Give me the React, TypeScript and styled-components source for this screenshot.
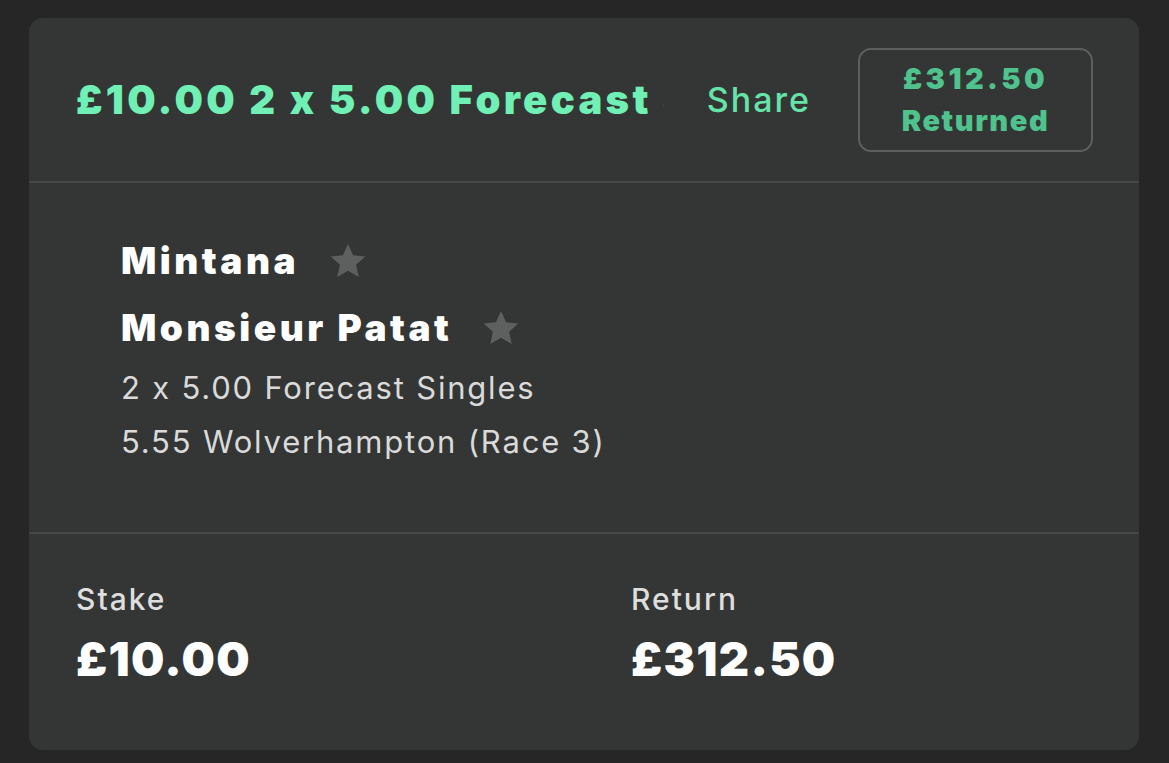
import React from 'react';
import styled, { createGlobalStyle } from 'styled-components';

const GlobalStyle = createGlobalStyle`
  html, body {
    margin: 0;
    padding: 0;
    background: #262626;
    font-family: Inter, "Noto Sans", "Liberation Sans", sans-serif;
    -webkit-font-smoothing: antialiased;
  }
`;

const Page = styled.div`
  padding: 18px 30px 14px 29px;
`;

const Card = styled.div`
  width: 1110px;
  background: #333635;
  border-radius: 14px;
  overflow: hidden;
`;

const Header = styled.div`
  display: flex;
  align-items: center;
  height: 163px;
  padding: 0 46px 0 47px;
  border-bottom: 2px solid #464947;
`;

const Title = styled.div`
  flex: 1;
  min-width: 0;
  overflow: hidden;
  white-space: nowrap;
  font-size: 40px;
  font-weight: 900;
  color: #70f0b4;
  letter-spacing: 3.3px;
`;

const ShareButton = styled.button`
  margin-left: 43px;
  padding: 0;
  border: none;
  background: none;
  font-family: inherit;
  font-size: 34px;
  font-weight: 500;
  color: #66e3a8;
  letter-spacing: 2px;
  cursor: pointer;
`;

const ReturnedBadge = styled.div`
  margin-left: 47px;
  width: 235px;
  height: 104px;
  box-sizing: border-box;
  border: 2px solid #5c5f5d;
  border-radius: 13px;
  display: flex;
  flex-direction: column;
  align-items: center;
  justify-content: center;
  color: #4fc28d;
  font-size: 29px;
  font-weight: 900;
  line-height: 42px;
`;

const BadgeLine = styled.span<{ $spacing: number }>`
  letter-spacing: ${p => p.$spacing}px;
`;

const Selections = styled.div`
  padding: 44px 47px 63px 92px;
  border-bottom: 2px solid #464947;
`;

const NameRow = styled.div`
  display: flex;
  align-items: center;
  gap: 29px;
  height: 67px;
`;

const Name = styled.span`
  font-size: 37px;
  font-weight: 900;
  color: #ffffff;
  letter-spacing: 3.5px;
`;

const Detail = styled.div`
  font-size: 31px;
  font-weight: 400;
  line-height: 54px;
  color: #dadada;
  letter-spacing: 1.8px;
`;

const Totals = styled.div`
  display: grid;
  grid-template-columns: 1fr 1fr;
  padding: 45px 0 61px;
`;

const TotalCell = styled.div`
  padding-left: 47px;
`;

const TotalLabel = styled.div`
  font-size: 30px;
  font-weight: 500;
  line-height: 40px;
  color: #dedede;
  letter-spacing: 2px;
`;

const TotalValue = styled.div`
  margin-top: 10px;
  font-size: 47px;
  font-weight: 900;
  line-height: 60px;
  color: #ffffff;
  letter-spacing: 1.3px;
`;

const Star = () => (
  <svg width="40" height="40" viewBox="0 0 24 24">
    <path
      d="M12 1.8l3.05 6.8 7.35.7-5.55 4.95 1.6 7.3L12 17.8l-6.45 3.75 1.6-7.3L1.6 9.3l7.35-.7z"
      fill="#5d605e"
    />
  </svg>
);

const App: React.FC = () => {
  const runners = ['Mintana', 'Monsieur Patat'];

  return (
    <>
      <GlobalStyle />
      <Page>
        <Card>
          <Header>
            <Title>£10.00 2 x 5.00 Forecast Singles</Title>
            <ShareButton>Share</ShareButton>
            <ReturnedBadge>
              <BadgeLine $spacing={3.4}>£312.50</BadgeLine>
              <BadgeLine $spacing={1.6}>Returned</BadgeLine>
            </ReturnedBadge>
          </Header>
          <Selections>
            {runners.map(name => (
              <NameRow key={name}>
                <Name>{name}</Name>
                <Star />
              </NameRow>
            ))}
            <Detail>2 x 5.00 Forecast Singles</Detail>
            <Detail>5.55 Wolverhampton (Race 3)</Detail>
          </Selections>
          <Totals>
            <TotalCell>
              <TotalLabel>Stake</TotalLabel>
              <TotalValue>£10.00</TotalValue>
            </TotalCell>
            <TotalCell>
              <TotalLabel>Return</TotalLabel>
              <TotalValue>£312.50</TotalValue>
            </TotalCell>
          </Totals>
        </Card>
      </Page>
    </>
  );
};

export default App;
